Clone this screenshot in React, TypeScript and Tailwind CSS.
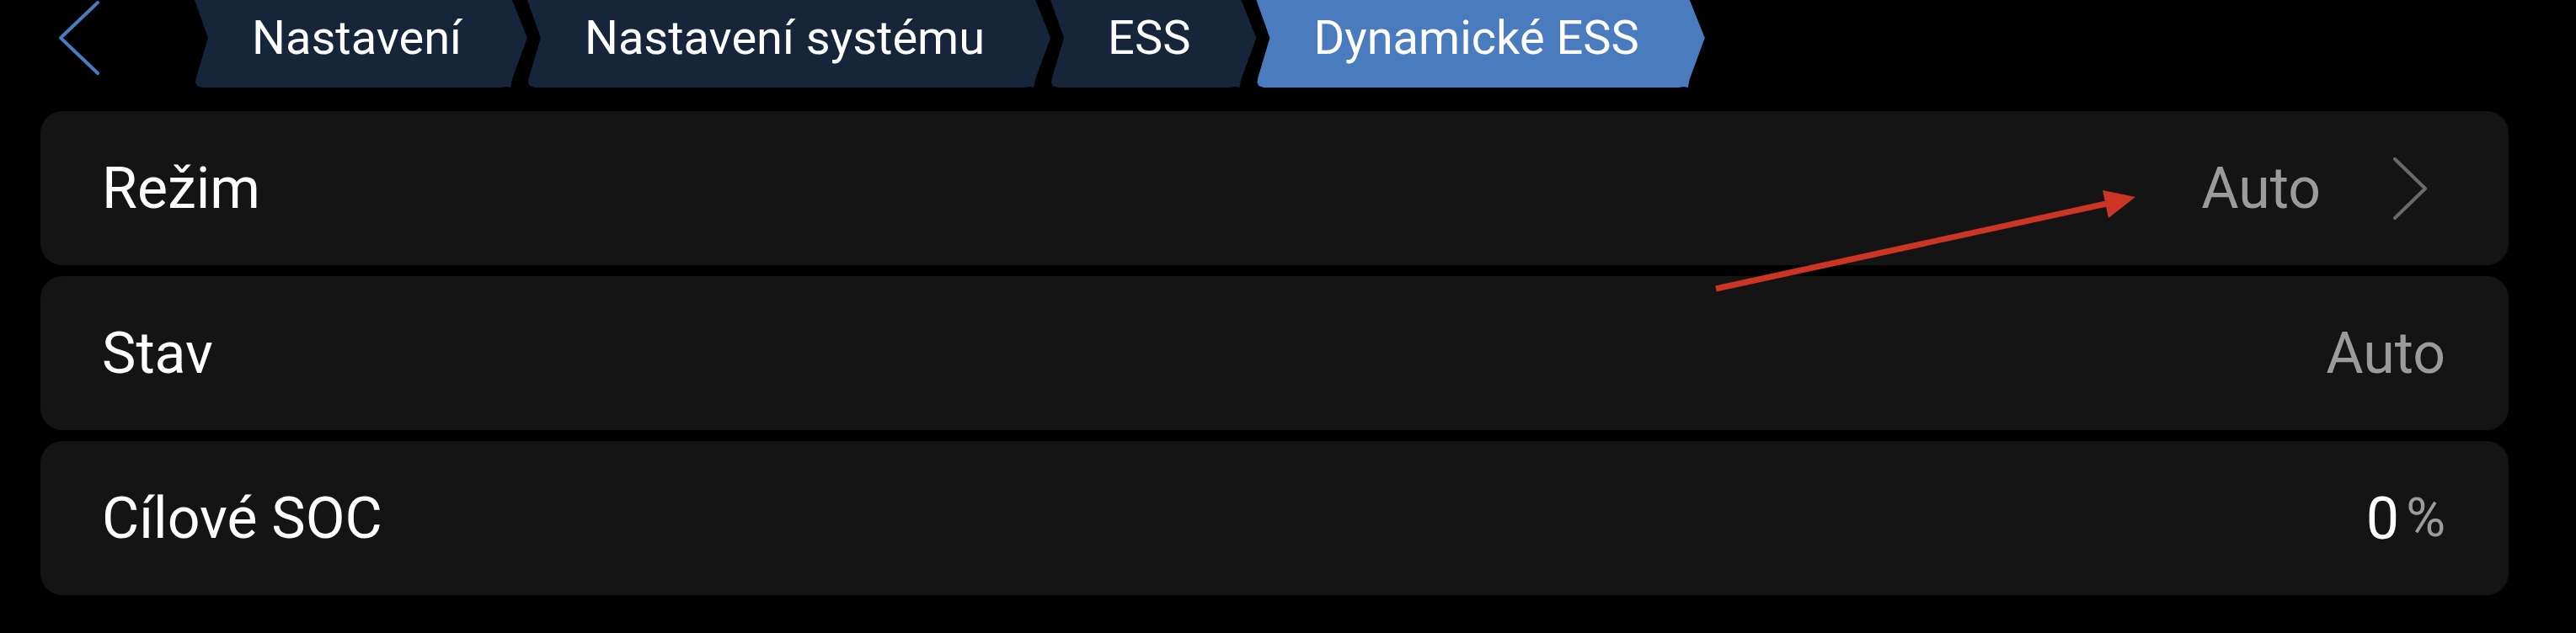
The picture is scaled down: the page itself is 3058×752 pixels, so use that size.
import React from "react"

type Crumb = { label: string; active?: boolean }

const crumbs: Crumb[] = [
    { label: "Nastavení" },
    { label: "Nastavení systému" },
    { label: "ESS" },
    { label: "Dynamické ESS", active: true },
]

// chevron shaped breadcrumb tab, notch on the left and point on the right
function Tab({ label, active }: Crumb) {
    return (
        <div
            className={
                "flex h-[104px] items-center pb-[14px] pl-[68px] pr-[78px] text-[56px] leading-none text-white " +
                "[clip-path:polygon(0_0,calc(100%-18px)_0,100%_45px,calc(100%-18px)_94px,calc(100%-20px)_100%,calc(100%-25px)_103px,calc(100%-31px)_104px,9px_104px,3px_102px,1px_98px,2px_92px,16px_45px)] " +
                (active ? "bg-[#4a7bbf]" : "bg-[#17253b]")
            }
        >
            {label}
        </div>
    )
}

function Row({ label, children }: { label: string; children: React.ReactNode }) {
    return (
        <div className="flex h-[183px] items-center justify-between rounded-[26px] bg-[#141414] pl-[73px] pr-[75px]">
            <span className="text-[68px] leading-none text-white">{label}</span>
            <div className="flex items-center">{children}</div>
        </div>
    )
}

export default function App() {
    return (
        <div className="relative h-[752px] w-[3058px] overflow-hidden bg-black font-['Roboto',sans-serif]">
            {/* header with back button and breadcrumbs */}
            <div className="flex h-[104px] items-start">
                <div className="h-[104px] w-[231px]">
                    <svg width="52" height="92" viewBox="0 0 52 92" className="ml-[68px] mt-[-1px]">
                        <polyline
                            points="48,4 4,46 48,88"
                            fill="none"
                            stroke="#4a7bc0"
                            strokeWidth="4"
                            strokeLinecap="round"
                            strokeLinejoin="round"
                        />
                    </svg>
                </div>
                <div className="flex">
                    {crumbs.map((c) => (
                        <Tab key={c.label} {...c} />
                    ))}
                </div>
            </div>

            {/* settings list */}
            <div className="ml-[48px] mr-[80px] mt-[28px] flex flex-col gap-[13px]">
                <Row label="Režim">
                    <span className="text-[68px] leading-none text-[#9b9b9b]">Auto</span>
                    <svg width="44" height="78" viewBox="0 0 44 78" className="ml-[84px] mr-[20px]">
                        <polyline
                            points="4,4 40,39 4,74"
                            fill="none"
                            stroke="#6a6a6a"
                            strokeWidth="4"
                            strokeLinecap="round"
                            strokeLinejoin="round"
                        />
                    </svg>
                </Row>
                <Row label="Stav">
                    <span className="text-[68px] leading-none text-[#9b9b9b]">Auto</span>
                </Row>
                <Row label="Cílové SOC">
                    <span className="text-[70px] leading-none text-white">0</span>
                    <span className="ml-[8px] text-[64px] leading-none text-[#9b9b9b]">%</span>
                </Row>
            </div>

            {/* red annotation arrow */}
            <svg
                className="pointer-events-none absolute left-0 top-0"
                width="3058"
                height="752"
                viewBox="0 0 3058 752"
            >
                <line x1="2037" y1="343" x2="2505" y2="241" stroke="#cc3524" strokeWidth="7" />
                <polygon points="2535,234 2496,226 2503,259" fill="#cc3524" />
            </svg>
        </div>
    )
}
